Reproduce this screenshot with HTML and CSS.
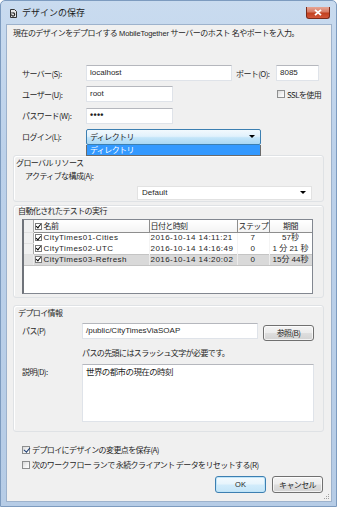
FILE: index.html
```html
<!DOCTYPE html>
<html lang="ja">
<head>
<meta charset="utf-8">
<title>デザインの保存</title>
<link rel="stylesheet" href="styles.css">
</head>
<body>
<div class="window">
  <div class="titlebar">
    <svg class="app-icon" width="8" height="9" viewBox="0 0 8 9">
      <path d="M1.5 0.5h4l2 2v6h-6z" fill="#e8e8e8" stroke="#333" stroke-width="1"/>
      <path d="M2.5 5.5a1.6 1.6 0 1 0 1.6-1.6h-0.6" fill="none" stroke="#222" stroke-width="1.1"/>
      <path d="M3.2 2.8l-1 1.1 1 1.1z" fill="#222"/>
    </svg>
    <span class="title">デザインの保存</span>
    <div class="close">
      <svg width="8" height="7" viewBox="0 0 8 7"><path d="M1 0.8l6 5.4M7 0.8l-6 5.4" stroke="#fff" stroke-width="1.8"/></svg>
    </div>
  </div>

  <div class="client">
    <p class="intro">現在のデザインをデプロイする <span class="latin-s">MobileTogether</span> サーバーのホスト 名やポートを入力。</p>

    <div class="form">
      <span class="lbl">サーバー(S):</span>
      <div class="input">localhost</div>
      <span class="lbl port-lbl">ポート(O):</span>
      <div class="input">8085</div>

      <span class="lbl">ユーザー(U):</span>
      <div class="input short">root</div>
      <span></span>
      <div class="check ssl"><span class="cb"></span><span class="lbl">SSLを使用</span></div>

      <span class="lbl">パスワード(W):</span>
      <div class="input short pw">••••</div>
      <span></span><span></span>

      <span class="lbl">ログイン(L):</span>
      <div class="combo focus login">
        <span class="lbl">ディレクトリ</span><span class="arrow"></span>
        <div class="droplist"><span class="lbl">ディレクトリ</span></div>
      </div>
    </div>

    <section class="group g1">
      <div class="group-title lbl">グローバル リソース</div>
      <div class="sub-label lbl">アクティブな構成(A):</div>
      <div class="combo default"><span>Default</span><span class="arrow"></span></div>
    </section>

    <section class="group g2">
      <div class="group-title lbl">自動化されたテストの実行</div>
      <div class="grid-wrap">
        <table class="tests">
          <colgroup>
            <col class="c-rh"><col class="c-name"><col class="c-date"><col class="c-step"><col class="c-dur">
          </colgroup>
          <thead>
            <tr>
              <th class="rh"></th>
              <th class="left"><span class="mini-cb"></span><span class="lbl">名前</span></th>
              <th class="left"><span class="lbl">日付と時刻</span></th>
              <th><span class="lbl">ステップ</span></th>
              <th><span class="lbl">期間</span></th>
            </tr>
          </thead>
          <tbody>
            <tr>
              <td class="rh"></td>
              <td class="left"><span class="mini-cb"></span>CityTimes01-Cities</td>
              <td class="left">2016-10-14 14:11:21</td>
              <td>7</td>
              <td>57秒</td>
            </tr>
            <tr>
              <td class="rh"></td>
              <td class="left"><span class="mini-cb"></span>CityTimes02-UTC</td>
              <td class="left">2016-10-14 14:16:49</td>
              <td>0</td>
              <td>1 分 21 秒</td>
            </tr>
            <tr class="sel">
              <td class="rh"></td>
              <td class="left"><span class="mini-cb"></span>CityTimes03-Refresh</td>
              <td class="left">2016-10-14 14:20:02</td>
              <td>0</td>
              <td>15分 44秒</td>
            </tr>
          </tbody>
        </table>
      </div>
    </section>

    <section class="group g3">
      <div class="group-title lbl">デプロイ情報</div>
      <div class="path-row">
        <span class="lbl row-lbl">パス(P)</span>
        <div class="input path">/public/CityTimesViaSOAP</div>
        <div class="btn browse"><span class="lbl">参照(B)</span></div>
      </div>
      <div class="hint lbl">パスの先頭にはスラッシュ文字が必要です。</div>
      <div class="desc-row">
        <span class="lbl row-lbl desc-lbl">説明(D):</span>
        <div class="textarea"><span class="lbl">世界の都市の現在の時刻</span></div>
      </div>
    </section>

    <div class="check opt first"><span class="cb checked"></span><span class="lbl">デプロイにデザインの変更点を保存(A)</span></div>
    <div class="check opt"><span class="cb"></span><span class="lbl">次のワークフロー ランで 永続クライアント データをリセットする(R)</span></div>

    <div class="buttons">
      <div class="btn ok">OK</div>
      <div class="btn"><span class="lbl">キャンセル</span></div>
    </div>

    <svg class="grip" width="7" height="7" viewBox="0 0 7 7">
      <g fill="#a0a0a0">
        <rect x="5" y="1" width="1" height="1"/>
        <rect x="3" y="3" width="1" height="1"/><rect x="5" y="3" width="1" height="1"/>
        <rect x="1" y="5" width="1" height="1"/><rect x="3" y="5" width="1" height="1"/><rect x="5" y="5" width="1" height="1"/>
      </g>
    </svg>
  </div>
</div>
</body>
</html>
```

FILE: styles.css
```css
* { box-sizing: border-box; }

html, body {
  margin: 0;
  padding: 0;
  background: #ffffff;
}

body {
  font-family: "Liberation Sans", "Noto Sans CJK JP", sans-serif;
  font-size: 8px;
  color: #1f1f1f;
}

.window {
  width: 337px;
  height: 507px;
  display: flex;
  flex-direction: column;
  padding: 0 4px 4px 5px;
  background: linear-gradient(180deg, #c9dbef 0%, #bcd1ea 30%, #b6cce6 100%);
  border: 1px solid #7d9bbf;
  border-radius: 5px 5px 0 0;
}

.titlebar {
  height: 23px;
  display: flex;
  align-items: center;
  padding: 1px 3px 0 3px;
  margin-right: -1px;
}

.app-icon { display: block; flex: none; }

.title {
  margin-left: 5px;
  font-family: "Noto Sans CJK JP", sans-serif;
  font-size: 9px;
  line-height: 12px;
  color: #1b1b1b;
}

.close {
  margin-left: auto;
  width: 24px;
  height: 12px;
  display: flex;
  align-items: center;
  justify-content: center;
  border: 1px solid #7a2a1a;
  border-top: none;
  border-radius: 0 0 3px 3px;
  background: linear-gradient(180deg, #e7a595 0%, #d67a64 45%, #c2401f 55%, #d2563a 100%);
}

.close svg { display: block; }

.client {
  flex: 1;
  position: relative;
  background: #f0f0f0;
  border: 1px solid #9db2cc;
  padding: 3px 7px 0 6px;
}

.lbl {
  font-family: "Noto Sans CJK JP", sans-serif;
  letter-spacing: -0.6px;
}

.latin-s {
  font-family: "Liberation Sans", sans-serif;
  font-size: 7.5px;
  letter-spacing: -0.2px;
}

.intro {
  margin: 0;
  line-height: 12px;
  font-family: "Liberation Sans", "Noto Sans CJK JP", sans-serif;
  letter-spacing: -0.55px;
  white-space: nowrap;
}

.intro .latin-s { letter-spacing: -0.1px; }

/* form */
.form {
  margin: 25px 0 0 9px;
  display: grid;
  grid-template-columns: 60px 146px 36px 43px;
  column-gap: 4px;
  row-gap: 5.33px;
  grid-auto-rows: 16px;
  align-items: center;
}

.form .lbl { white-space: nowrap; }

.input {
  height: 16px;
  background: #ffffff;
  border: 1px solid #dfe3e9;
  border-top-color: #b5b7bd;
  padding: 0 3px;
  line-height: 13px;
  font-size: 8px;
  white-space: nowrap;
  overflow: hidden;
}

.input.short { width: 87px; }

.input.pw {
  font-size: 9px;
  font-weight: bold;
  letter-spacing: 0.3px;
  line-height: 13px;
}

.check {
  display: flex;
  align-items: center;
  white-space: nowrap;
}

.cb {
  flex: none;
  width: 8px;
  height: 8px;
  border: 1px solid #8e8f8f;
  background: linear-gradient(135deg, #d9d9d9 0%, #f4f4f4 60%, #ffffff 100%);
  margin-right: 2px;
  position: relative;
}

.cb.checked::after {
  content: "";
  position: absolute;
  left: 1.5px;
  top: -0.5px;
  width: 2.5px;
  height: 5px;
  border: solid #1e3f73;
  border-width: 0 1.3px 1.3px 0;
  transform: rotate(40deg);
}

.ssl { overflow: visible; }
.ssl .cb { margin-left: 1px; margin-right: 2px; }

.combo {
  height: 16px;
  display: flex;
  align-items: center;
  padding: 0 5px 0 3px;
  border: 1px solid #abadb3;
  background: #ffffff;
  white-space: nowrap;
}

.combo .arrow {
  margin-left: auto;
  width: 0;
  height: 0;
  border-left: 3px solid transparent;
  border-right: 3px solid transparent;
  border-top: 3px solid #000;
}

.combo.login {
  grid-column: 2 / span 2;
  width: 175px;
  position: relative;
  border-color: #3c7fb1;
  border-radius: 2px;
  background: linear-gradient(180deg, #f2f9fd 0%, #e1f1fc 45%, #c4e5f9 55%, #a9d8f4 100%);
}

.droplist {
  position: absolute;
  left: -1px;
  top: 15px;
  width: 175px;
  height: 11px;
  background: #3399ff;
  border: 1px solid #6b6b6b;
  border-top: none;
  color: #ffffff;
  padding: 0 3px;
  line-height: 10px;
}

/* groups */
.group {
  border: 1px solid #dfe2e5;
  border-radius: 3px;
  box-shadow: inset 1px 1px 0 #ffffff;
}

.group-title {
  line-height: 10px;
  white-space: nowrap;
}

.g1 {
  margin-top: 10px;
  padding: 2px 0 1px 2px;
}

.sub-label {
  margin: 3px 0 0 9px;
  line-height: 10px;
}

.combo.default {
  margin: 5px 0 0 121px;
  width: 175px;
  height: 14px;
  border-color: #e2e2e2;
  padding-left: 4px;
}

.g2 {
  margin-top: 3px;
  padding: 0 0 3px 4px;
}

.grid-wrap {
  margin: 3px 0 0 4px;
  width: 291px;
  height: 75px;
  background: #ffffff;
  border: 1px solid #828790;
  border-left: 2px solid #6f737a;
  overflow: hidden;
}

.tests {
  border-collapse: collapse;
  table-layout: fixed;
  width: 288px;
  font-family: "Liberation Sans", "Noto Sans CJK JP", sans-serif;
  font-size: 8px;
}

.c-rh { width: 9px; }
.c-name { width: 116px; }
.c-date { width: 88px; }
.c-step { width: 32px; }
.c-dur { width: 43px; }

.tests th, .tests td {
  padding: 0 1px;
  text-align: center;
  white-space: nowrap;
  overflow: hidden;
  font-weight: normal;
}

.tests th {
  height: 12px;
  line-height: 11px;
  background: linear-gradient(180deg, #ffffff 0%, #f3f3f3 100%);
  border-right: 1px solid #8e8e8e;
  border-bottom: 1px solid #8e8e8e;
}

.tests td {
  height: 11px;
  line-height: 10px;
  letter-spacing: 0.45px;
  border-right: 1px solid #f4f4f4;
}

.tests td:last-child { letter-spacing: 0; }

.tests .left { text-align: left; }

.tests .rh {
  background: #f0f0f0;
  border-right: 1px solid #a9a9a9;
  border-bottom: 1px solid #e0e0e0;
}

.tests tr.sel td {
  background: #d9d9d9;
  border-right-color: #ececec;
  border-top: 1px solid #c4c4c4;
  border-bottom: 1px solid #c4c4c4;
}

.tests tr.sel td.rh { background: #e2e2e2; }

.mini-cb {
  display: inline-block;
  vertical-align: -1px;
  width: 7px;
  height: 7px;
  margin: 0 2px 0 0;
  border: 1px solid #7a7a7a;
  background: #ffffff;
  position: relative;
}

.mini-cb::after {
  content: "";
  position: absolute;
  left: 1.5px;
  top: -0.5px;
  width: 1.8px;
  height: 3.8px;
  border: solid #000;
  border-width: 0 1.2px 1.2px 0;
  transform: rotate(40deg);
}

.g3 {
  margin-top: 7px;
  padding: 2px 0 9px 4px;
}

.path-row {
  margin-top: 5px;
  display: flex;
  align-items: flex-start;
}

.row-lbl {
  margin-left: 4px;
  width: 60px;
  flex: none;
  line-height: 16px;
  white-space: nowrap;
}

.input.path { width: 176px; }

.btn {
  height: 17px;
  display: flex;
  align-items: center;
  justify-content: center;
  border: 1px solid #707070;
  border-radius: 3px;
  background: linear-gradient(180deg, #f4f4f4 0%, #ececec 48%, #dedede 52%, #d3d3d3 100%);
  box-shadow: inset 0 0 0 1px rgba(255, 255, 255, 0.7);
  white-space: nowrap;
}

.btn.browse {
  margin: 2px 0 0 5px;
  width: 51px;
  height: 16px;
}

.hint {
  margin: 7px 0 0 64px;
  line-height: 10px;
  white-space: nowrap;
}

.desc-row {
  margin-top: 6px;
  display: flex;
  align-items: flex-start;
}

.desc-lbl {
  line-height: 10px;
  padding-top: 3px;
}

.textarea {
  width: 232px;
  height: 58px;
  background: #ffffff;
  border: 1px solid #dfe3e9;
  border-top-color: #b5b7bd;
  padding: 1px 3px;
  line-height: 11px;
  font-size: 8.5px;
}

.opt {
  margin-left: 9px;
  line-height: 10px;
  height: 10px;
  margin-top: 5px;
}

.opt.first { margin-top: 13px; }

.buttons {
  margin-top: 6px;
  display: flex;
  justify-content: flex-end;
  gap: 6px;
  padding-right: 1px;
}

.buttons .btn { width: 51px; }

.btn.ok {
  border-color: #3c7fb1;
  background: linear-gradient(180deg, #f3fafe 0%, #e6f4fc 48%, #d2ecfb 52%, #c4e5f8 100%);
  box-shadow: inset 0 0 0 1px #bfe4f8;
  font-size: 7.5px;
}

.grip {
  position: absolute;
  right: 1px;
  bottom: 1px;
  display: block;
}
```
